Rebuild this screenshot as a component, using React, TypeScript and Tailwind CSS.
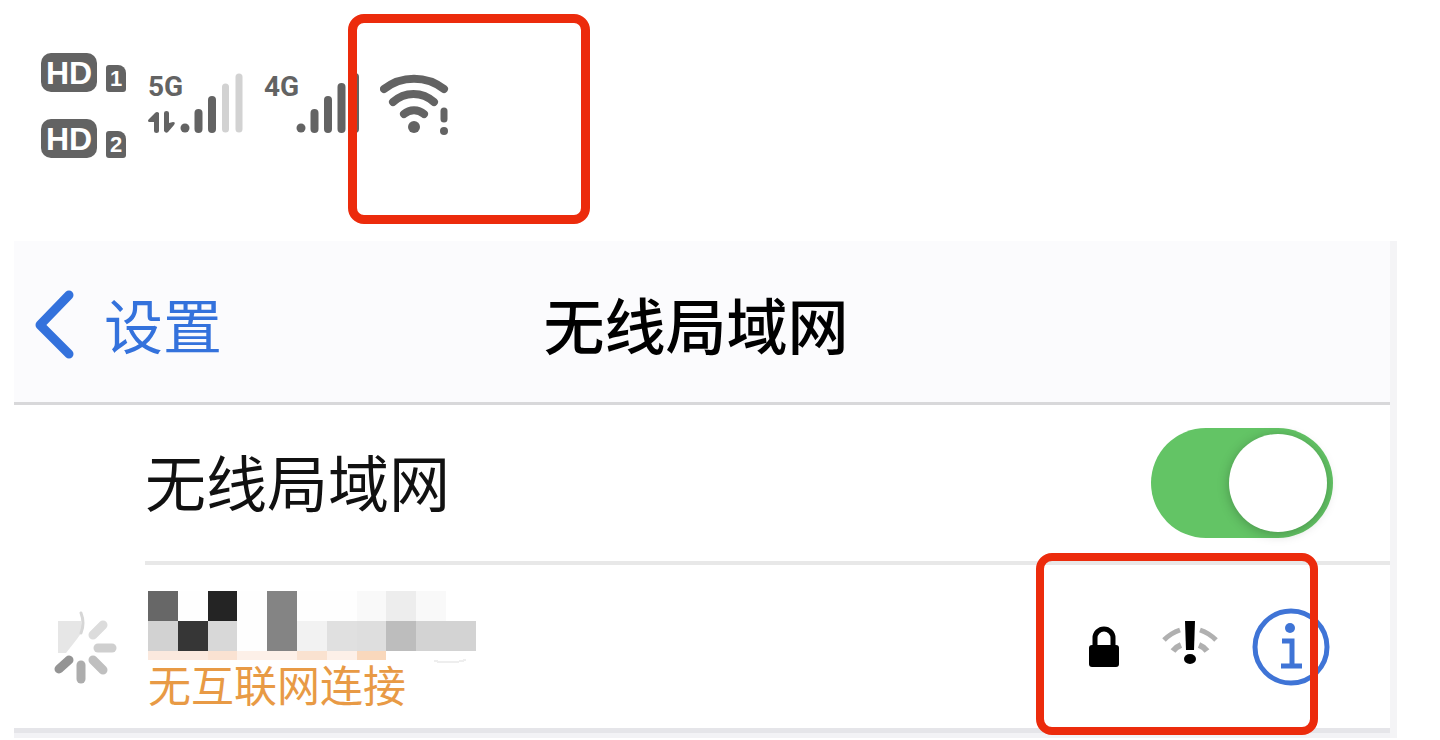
import { useState } from "react";

// Pixelated network name: one entry per cell, left to right
const MOSAIC_ROWS = [
  ["#676767", "#fefefe", "#242424", "#fefefe", "#848484", "#fefefe", "#fefefe", "#f9f9f9", "#ededed", "#f9f9f9", "#ffffff"],
  ["#d2d2d2", "#363636", "#d8d8d8", "#fefefe", "#848484", "#f2f2f2", "#e0e0e0", "#dedede", "#bdbdbd", "#d3d3d3", "#d3d3d3"],
];
const MOSAIC_STRIP = ["#fbe9de", "#fbe9de", "#fae2d2", "#fdf0e8", "#fdf0e8", "#fae2d0", "#fdf0e8", "#f9d8bc"];

export default function App() {
  return (
    <main className="bg-white font-['Noto_Sans_CJK_SC','Noto_Sans',sans-serif]">
      <StatusBar />
      <WifiSettings />
    </main>
  );
}

function StatusBar() {
  return (
    <header className="relative flex h-[241px] items-start pl-[41px] pt-[53px] font-['Liberation_Sans',sans-serif] text-[#636363]">
      <div className="flex flex-col gap-[27px]">
        <HdBadge sim="1" />
        <HdBadge sim="2" />
      </div>
      <div className="ml-[22px] mt-5 flex gap-5">
        <Signal label="5G" strength={3} data />
        <Signal label="4G" strength={5} />
        <WifiWarning />
      </div>
      <div className="pointer-events-none absolute left-[348px] top-[14px] h-[210px] w-[242px] rounded-2xl border-[9px] border-[#ec2b0c]" />
    </header>
  );
}

function HdBadge({ sim }: { sim: string }) {
  return (
    <div className="flex items-end gap-[9px]">
      <span className="flex h-[39px] w-14 items-center justify-center rounded-[10px] bg-[#636363] text-[32px] font-bold leading-none text-white">
        HD
      </span>
      <span className="flex h-[27px] w-5 items-center justify-center rounded-[3px] rounded-tr-lg bg-[#636363] text-[22px] font-bold leading-none text-white">
        {sim}
      </span>
    </div>
  );
}

function Signal({ label, strength, data }: { label: string; strength: number; data?: boolean }) {
  const tops = [55, 40, 27, 14, 4];
  return (
    <div className="flex">
      <div className="flex w-8 flex-col">
        <span className="font-['Roboto',sans-serif] text-[28px] font-bold leading-7">{label}</span>
        {data && (
          <svg className="mt-[9px]" width="28" height="24" viewBox="0 0 28 24" fill="currentColor">
            <path d="M7 3Q9 1 11 3V21Q11 23 8.500 23T6 21V12H1Q-1 11 1 9Z" />
            <path d="M16 3Q16 1 18.500 1T21 3V13L25 12Q28 12 26 15L20 22Q18 24 16 21Z" />
          </svg>
        )}
      </div>
      <svg width="64" height="60" viewBox="0 0 64 60" strokeLinecap="round">
        {tops.map((top, i) => (
          <line
            key={top}
            x1={5 + i * 13.5}
            x2={5 + i * 13.5}
            y1={top}
            y2={i === 0 ? 55.1 : 56}
            stroke={i < strength ? "#636363" : "#d2d2d2"}
            strokeWidth={i === 0 ? 9 : i < strength ? 8 : 7}
          />
        ))}
      </svg>
    </div>
  );
}

function WifiWarning() {
  return (
    <svg width="70" height="64" viewBox="0 0 70 64" fill="none" stroke="currentColor" strokeWidth="8" strokeLinecap="round">
      <path d="M4 16A49 49 0 0 1 64 16" />
      <path d="M13 29A30 30 0 0 1 54 29" />
      <path d="M24 41A15 15 0 0 1 44 41" />
      <circle cx="34" cy="54" r="6" fill="currentColor" stroke="none" />
      <path d="M64 38V46" strokeWidth="7" />
      <circle cx="64" cy="58" r="4" fill="currentColor" stroke="none" />
    </svg>
  );
}

function WifiSettings() {
  const [enabled, setEnabled] = useState(true);

  return (
    <section className="ml-[14px] mr-[43px] bg-[#f4f4f6]">
      <div className="mr-[7px] bg-white">
        <div className="grid h-[164px] grid-cols-[1fr_auto_1fr] items-center border-b-[3px] border-[#d8d8da] bg-[#fbfbfd] pl-5 pr-8 pt-1">
          <button type="button" className="flex items-center gap-7 justify-self-start text-[59px] leading-[80px] text-[#3472dc]">
            <svg width="42" height="70" viewBox="0 0 42 70" fill="none" stroke="currentColor" strokeWidth="9" strokeLinecap="round" strokeLinejoin="round">
              <path d="M35 6L6 36L35 65" />
            </svg>
            设置
          </button>
          <h1 className="text-[61px] font-medium leading-[80px] text-black">无线局域网</h1>
        </div>

        <div className="ml-[131px] flex h-40 items-center justify-between border-b-4 border-[#e8e8e8] pr-[57px]">
          <label htmlFor="wlan" className="pb-1 text-[61px] leading-[80px] text-[#111111]">
            无线局域网
          </label>
          <input
            id="wlan"
            type="checkbox"
            checked={enabled}
            onChange={(e) => setEnabled(e.target.checked)}
            className="h-[110px] w-[182px] appearance-none rounded-full bg-gray-200 before:ml-[6px] before:mt-[6px] before:block before:size-[98px] before:rounded-full before:bg-white before:shadow-[0_2px_12px_rgba(0,0,0,0.25)] checked:bg-[#63c465] checked:before:ml-[78px]"
          />
        </div>

        <div className="relative flex h-[163px] items-center pr-[60px]">
          <Spinner />
          <div className="ml-7 flex flex-1 flex-col">
            <Mosaic />
            <p className="text-[43px] leading-10 text-[#e89a45]">无互联网连接</p>
          </div>
          <LockIcon />
          <WeakWifiIcon />
          <button type="button" aria-label="详细信息" className="ml-[34px] text-[#3f74d6]">
            <svg width="78" height="78" viewBox="0 0 78 78" fill="none" stroke="currentColor" strokeWidth="5">
              <circle cx="39" cy="39" r="36" />
              <circle cx="38" cy="20" r="5" fill="currentColor" stroke="none" />
              <path d="M30 33H40V58M29 58H50" />
            </svg>
          </button>
          <div className="pointer-events-none absolute -top-3 right-[72px] h-[182px] w-[282px] rounded-2xl border-[8px] border-[#ec2b0c]" />
        </div>
      </div>
      <div className="mr-[7px] h-[10px] border-t-[5px] border-[#e5e5e9] bg-[#f2f2f5]" />
    </section>
  );
}

function Spinner() {
  return (
    <svg className="ml-[38px]" width="68" height="76" viewBox="0 0 68 76" fill="none" strokeWidth="9" strokeLinecap="round">
      <path d="M6 12H29Q32 22 25 30L14 44H6Z" fill="#e6e6e6" />
      <path d="M29 4Q33 14 29 24" stroke="#d6d6d6" strokeWidth="3" />
      <path d="M41 26L51 16" stroke="#dcdcdc" />
      <path d="M46 39H60" stroke="#cfcfcf" />
      <path d="M41 51L51 61" stroke="#bfbfbf" />
      <path d="M29 56V70" stroke="#adadad" />
      <path d="M17 51L7 60" stroke="#949494" />
    </svg>
  );
}

function Mosaic() {
  return (
    <svg width="328" height="72" viewBox="0 0 328 72" shapeRendering="crispEdges">
      {MOSAIC_ROWS.map((row, y) =>
        row.map((fill, x) => (
          <rect key={`${x}-${y}`} x={x * 29.8} y={y * 30} width="29.8" height="30" fill={fill} />
        )),
      )}
      {MOSAIC_STRIP.map((fill, x) => (
        <rect key={x} x={x * 29.8} y="60" width="29.8" height="9" fill={fill} />
      ))}
      <path d="M286 70Q304 73 318 69" fill="none" stroke="#eeeeee" strokeWidth="2" />
    </svg>
  );
}

function LockIcon() {
  return (
    <svg width="30" height="42" viewBox="0 0 30 42">
      <path d="M6 21V12a9 9 0 0 1 18 0V21" fill="none" stroke="#000" strokeWidth="5" />
      <rect y="19" width="30" height="22" rx="3" />
    </svg>
  );
}

function WeakWifiIcon() {
  return (
    <svg className="-mt-2 ml-[43px]" width="56" height="46" viewBox="0 0 56 46" fill="none" stroke="#b0b0b0" strokeWidth="5">
      <path d="M2 20Q9 13 18 10M38 10Q47 13 54 20" />
      <path d="M11 31Q14 27 19 25M37 25Q42 27 45 31" strokeWidth="6" />
      <path d="M23 1H33L32 30H24Z" fill="#000" stroke="none" />
      <ellipse cx="28" cy="39" rx="6" ry="5" fill="#000" stroke="none" />
    </svg>
  );
}
